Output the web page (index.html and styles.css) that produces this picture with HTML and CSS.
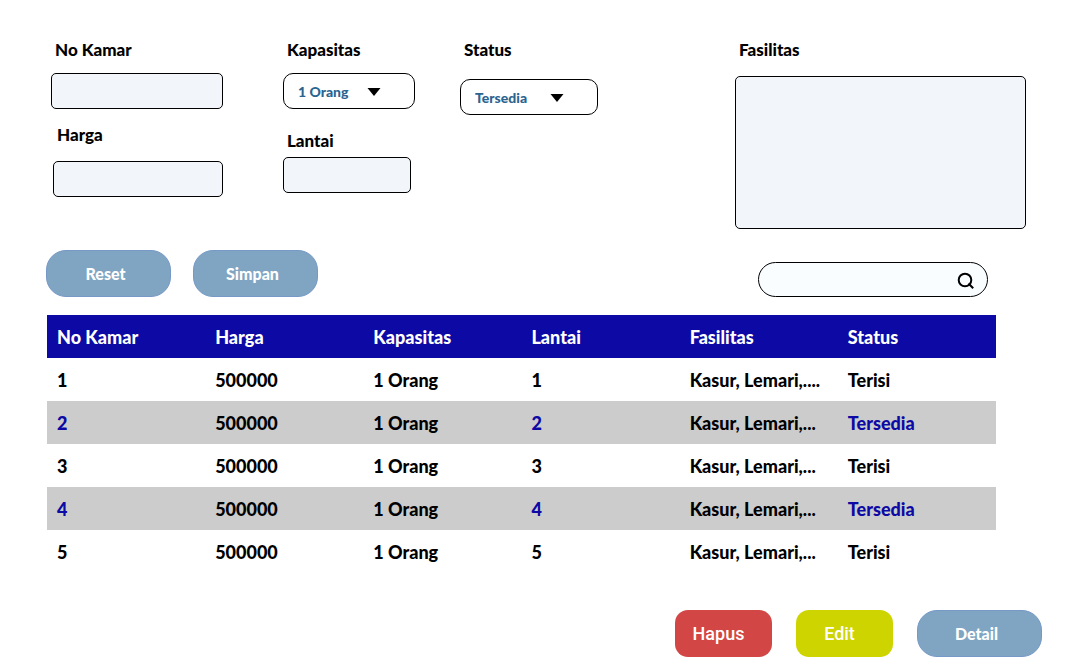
FILE: index.html
```html
<!DOCTYPE html>
<html lang="id">
<head>
<meta charset="utf-8">
<meta name="viewport" content="width=device-width, initial-scale=1">
<title>Data Kamar</title>
<link rel="stylesheet" href="styles.css">
</head>
<body>
<main class="page">
  <form class="room-form" id="room-form">
    <div class="form-col form-col-room">
      <div class="field">
        <label class="field-label" for="no-kamar">No Kamar</label>
        <input class="text-box" id="no-kamar" type="text">
      </div>
      <div class="field field-price">
        <label class="field-label" for="harga">Harga</label>
        <input class="text-box" id="harga" type="text">
      </div>
    </div>
    <div class="form-col form-col-capacity">
      <div class="field">
        <label class="field-label" for="kapasitas">Kapasitas</label>
        <div class="select-wrap">
          <select class="select" id="kapasitas"><option>1 Orang</option></select>
          <svg class="select-arrow" viewBox="0 0 14 8" aria-hidden="true"><path d="M0.5 0h13L7 8z"/></svg>
        </div>
      </div>
      <div class="field field-floor">
        <label class="field-label" for="lantai">Lantai</label>
        <input class="text-box" id="lantai" type="text">
      </div>
    </div>
    <div class="form-col form-col-status">
      <div class="field field-status">
        <label class="field-label" for="status">Status</label>
        <div class="select-wrap">
          <select class="select" id="status"><option>Tersedia</option></select>
          <svg class="select-arrow" viewBox="0 0 14 8" aria-hidden="true"><path d="M0.5 0h13L7 8z"/></svg>
        </div>
      </div>
    </div>
    <div class="form-col">
      <div class="field field-facilities">
        <label class="field-label" for="fasilitas">Fasilitas</label>
        <textarea class="text-box text-area" id="fasilitas"></textarea>
      </div>
    </div>
  </form>

  <div class="toolbar">
    <button class="btn btn-blue" type="reset" form="room-form">Reset</button>
    <button class="btn btn-blue" type="submit" form="room-form">Simpan</button>
    <div class="search">
      <input class="search-input" type="search" aria-label="Cari">
      <svg class="search-icon" viewBox="0 0 18 18" aria-hidden="true"><circle cx="8" cy="8" r="6.3"/><path d="M11.5 11.5l4.7 4.7"/></svg>
    </div>
  </div>

  <table class="rooms">
    <thead>
      <tr><th>No Kamar</th><th>Harga</th><th>Kapasitas</th><th>Lantai</th><th>Fasilitas</th><th>Status</th></tr>
    </thead>
    <tbody>
      <tr><td>1</td><td>500000</td><td>1 Orang</td><td>1</td><td>Kasur, Lemari,....</td><td>Terisi</td></tr>
      <tr class="free"><td class="mark">2</td><td>500000</td><td>1 Orang</td><td class="mark">2</td><td>Kasur, Lemari,...</td><td class="mark">Tersedia</td></tr>
      <tr><td>3</td><td>500000</td><td>1 Orang</td><td>3</td><td>Kasur, Lemari,...</td><td>Terisi</td></tr>
      <tr class="free"><td class="mark">4</td><td>500000</td><td>1 Orang</td><td class="mark">4</td><td>Kasur, Lemari,...</td><td class="mark">Tersedia</td></tr>
      <tr><td>5</td><td>500000</td><td>1 Orang</td><td>5</td><td>Kasur, Lemari,...</td><td>Terisi</td></tr>
    </tbody>
  </table>

  <div class="actions">
    <button class="btn btn-small btn-red" type="button">Hapus</button>
    <button class="btn btn-small btn-yellow" type="button">Edit</button>
    <button class="btn btn-blue" type="button">Detail</button>
  </div>
</main>
</body>
</html>
```
FILE: styles.css
```css
* {
  box-sizing: border-box;
}

body {
  margin: 0;
  background: #fff;
  color: #000;
  font-family: Lato, "Open Sans", sans-serif;
  font-weight: 900;
}

button,
input,
select,
textarea {
  margin: 0;
  font: inherit;
}

.page {
  padding-top: 40px;
}

.room-form {
  display: grid;
  grid-template-columns: 232fr 177fr 275fr 291fr;
  padding: 0 43px 0 51px;
}

.form-col {
  display: flex;
  flex-direction: column;
  gap: 16px;
}

.form-col-room {
  padding-right: 60px;
}

.form-col-capacity {
  gap: 22px;
  padding-right: 45px;
}

.form-col-status {
  padding-right: 137px;
}

.field {
  display: flex;
  flex-direction: column;
  gap: 13px;
}

.field-price {
  gap: 16px;
  padding-left: 2px;
}

.field-floor {
  gap: 6px;
  padding-right: 4px;
}

.field-status {
  gap: 19px;
}

.field-facilities {
  gap: 16px;
}

.field-label {
  padding-left: 4px;
  font-size: 17px;
  line-height: 20px;
}

.text-box {
  width: 100%;
  height: 36px;
  padding: 0 10px;
  border: 1px solid #000;
  border-radius: 5px;
  background: #f2f6fb;
}

.text-area {
  height: 153px;
  padding: 10px;
  resize: none;
}

.select-wrap {
  position: relative;
}

.select {
  display: block;
  width: 100%;
  height: 36px;
  padding: 0 14px;
  border: 1px solid #000;
  border-radius: 10px;
  appearance: none;
  background: #fff;
  color: #2c6490;
  font-size: 14px;
}

.select-arrow {
  position: absolute;
  top: 15px;
  right: 34px;
  width: 14px;
  height: 8px;
  pointer-events: none;
}

.toolbar {
  display: flex;
  align-items: flex-end;
  gap: 22px;
  padding: 21px 81px 18px 46px;
}

.btn {
  width: 125px;
  height: 47px;
  padding: 0 6px 0 0;
  border: 0;
  border-radius: 20px;
  color: #fff;
  font-size: 16px;
}

.btn-blue {
  border: 1px solid #7799c8;
  background: #7fa5c2;
}

.btn-small {
  width: 97px;
  padding-right: 10px;
  border-radius: 13px;
  font-family: Roboto, sans-serif;
  font-size: 18px;
  font-weight: 500;
}

.btn-red {
  background: #d24745;
}

.btn-yellow {
  background: #ced400;
}

.search {
  position: relative;
  width: 230px;
  margin-left: auto;
}

.search-input {
  display: block;
  width: 100%;
  height: 35px;
  padding: 0 40px 0 16px;
  border: 1px solid #000;
  border-radius: 18px;
  appearance: none;
  background: #f9fdff;
}

.search-icon {
  position: absolute;
  top: 10px;
  right: 13px;
  width: 18px;
  height: 18px;
  fill: none;
  stroke: #000;
  stroke-width: 2;
}

.rooms {
  width: calc(100% - 120px);
  margin-left: 47px;
  border-collapse: collapse;
  table-layout: fixed;
  font-size: 18px;
  line-height: 23px;
}

.rooms th,
.rooms td {
  padding: 11px 0 9px 10px;
  font-weight: 900;
  text-align: left;
  white-space: nowrap;
}

.rooms th {
  background: #0d09a4;
  color: #fff;
}

.free {
  background: #ccc;
}

.rooms .mark {
  color: #0d09a4;
}

.actions {
  display: flex;
  justify-content: flex-end;
  gap: 24px;
  padding: 37px 27px 11px;
}
```
